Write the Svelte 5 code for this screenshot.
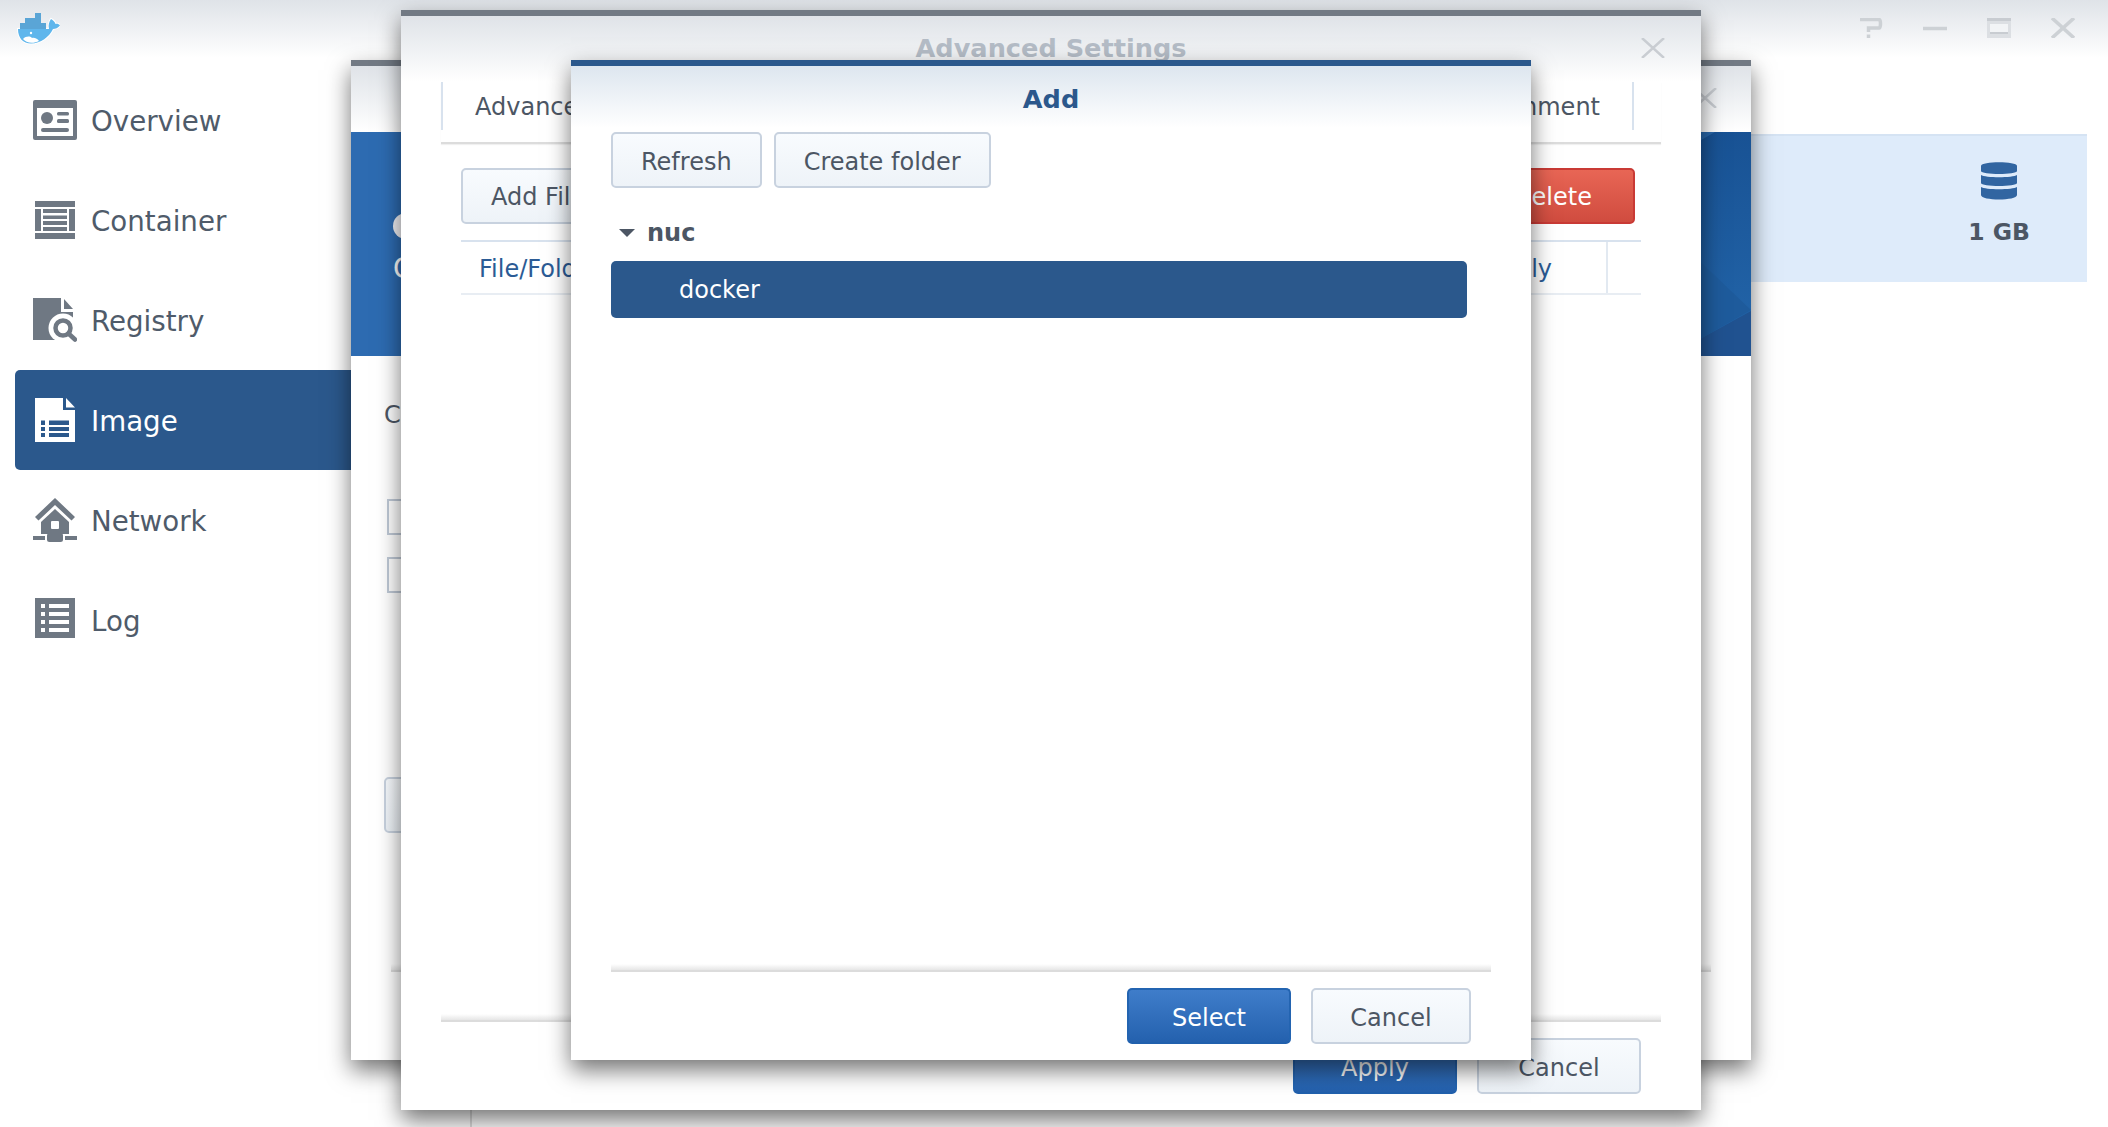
<script lang="ts">
  const navItems = [
    { id: 'overview', label: 'Overview' },
    { id: 'container', label: 'Container' },
    { id: 'registry', label: 'Registry' },
    { id: 'image', label: 'Image' },
    { id: 'network', label: 'Network' },
    { id: 'log', label: 'Log' },
  ];
  let active = $state('image');
</script>

<div class="app">
  <header class="topbar">
    <svg class="logo" width="44" height="33" viewBox="0 0 44 33">
      <path class="whale" d="M2 17H33C32 13 33 10 35 7C37 8 39 10 39.500 12C41 11.500 43 12 44 13.500C42 16 39.500 17 37 17C33 25 25 31.500 15 31.500C7 31.500 2 26 2 17Z" />
      <rect x="19" y="1" width="6" height="5" fill="#5aa5d6" />
      <rect x="9" y="6" width="16" height="5" fill="#5aa5d6" />
      <rect x="4" y="11" width="26" height="6" fill="#5aa5d6" />
      <path d="M7 27C10 24 14 24 16 26C18 25 22 27 23 29C17 32 10 31 7 27Z" fill="#fff" />
      <circle cx="15" cy="21" r="1.200" fill="#fff" />
    </svg>
    <div class="controls">
      <svg width="24" height="20" viewBox="0 0 24 20"><path d="M1 1.500H20C22 1.500 22 10 20 10H9.500V14M9.500 16.500V20" /></svg>
      <svg width="24" height="20" viewBox="0 0 24 20"><path d="M0 10.500H24" /></svg>
      <svg class="max" width="24" height="20" viewBox="0 0 24 20"><rect width="24" height="20" fill="#dcdfe3" /><rect y="0" width="24" height="3" fill="#c8ccd1" /><rect x="3" y="6" width="18" height="10" fill="#f2f4f6" /><rect x="3" y="14" width="18" height="2" fill="#c8ccd1" /></svg>
      <svg width="24" height="20" viewBox="0 0 24 20"><path d="M1 0L23 20M23 0L1 20" /></svg>
    </div>
  </header>

  <div class="shell">
    <nav class="sidebar">
      {#each navItems as item}
        <button type="button" class="nav-item {active === item.id ? 'is-active' : ''}" onclick={() => (active = item.id)}>
          <svg class="nav-icon" width="44" height="44" viewBox="0 0 44 44">
            {#if item.id === 'overview'}
              <rect y="2" width="44" height="40" rx="2" class="ink" />
              <rect x="4" y="10" width="36" height="28" fill="#fff" />
              <circle cx="14" cy="20" r="6" class="ink" />
              <rect x="24" y="14" width="12" height="3.500" rx="1.500" class="ink" />
              <rect x="24" y="21" width="12" height="4" rx="1.500" class="ink" />
              <rect x="8" y="30" width="28" height="4" rx="2" class="ink" />
            {:else if item.id === 'container'}
              <rect x="2" y="3" width="40" height="6" class="ink" />
              <rect x="2" y="35" width="40" height="6" class="ink" />
              <rect x="2" y="11" width="6" height="22" class="ink" />
              <rect x="36" y="11" width="6" height="22" class="ink" />
              <rect x="10" y="11" width="24" height="4" class="ink" />
              <rect x="10" y="17.500" width="24" height="3.500" class="ink" />
              <rect x="10" y="23" width="24" height="4" class="ink" />
              <rect x="10" y="29" width="24" height="4" class="ink" />
            {:else if item.id === 'registry'}
              <path class="ink" d="M0 0H28V14H40V42H0Z" />
              <path class="ink" d="M31 1L40 11H31Z" />
              <circle cx="30" cy="30" r="14.500" fill="#fff" />
              <path d="M35 35L44 44" stroke="#fff" stroke-width="8" />
              <circle cx="30" cy="30" r="7.500" fill="#fff" stroke="#6f7883" stroke-width="4.500" />
              <path d="M36 36L42 41.500" stroke="#6f7883" stroke-width="4.500" stroke-linecap="round" />
            {:else if item.id === 'image'}
              <path fill="#fff" d="M2 0H30V12H42V44H2Z" />
              <path fill="#fff" d="M33 0L42 9.500H33Z" />
              <rect x="8" y="22.500" width="4" height="4.500" fill="#2b588c" />
              <rect x="8" y="29" width="4" height="4" fill="#2b588c" />
              <rect x="8" y="35" width="4" height="4" fill="#2b588c" />
              <rect x="16" y="22.500" width="20" height="4.500" fill="#2b588c" />
              <rect x="16" y="29" width="20" height="4" fill="#2b588c" />
              <rect x="16" y="35" width="20" height="4" fill="#2b588c" />
            {:else if item.id === 'network'}
              <path class="ink" d="M22 0L42 19L38.500 22.500L22 7L5.500 22.500L2 19Z" />
              <path class="ink" d="M22 11L36 24V36H8V24Z" />
              <rect x="18" y="23" width="8" height="8" rx="1" fill="#fff" />
              <rect x="0" y="38" width="12" height="4" class="ink" />
              <rect x="32" y="38" width="12" height="4" class="ink" />
              <rect x="14" y="35" width="16" height="9" rx="2.500" class="ink" />
            {:else}
              <rect x="2" width="40" height="40" class="ink" />
              {#each [6, 14, 22, 30] as y}
                <rect x="8" {y} width="4" height="4" fill="#fff" />
                <rect x="16" {y} width="20" height="4" fill="#fff" />
              {/each}
            {/if}
          </svg>
          <span>{item.label}</span>
        </button>
      {/each}
    </nav>

    <main class="content">
      <div class="usage">
        <div class="usage-stat">
          <svg width="36" height="38" viewBox="0 0 36 38" fill="#3165a1">
            <path d="M0 4C0 -1 36 -1 36 4V9C36 13 0 13 0 9Z" />
            <path d="M0 13C4 16 32 16 36 13V21C36 25 0 25 0 21Z" />
            <path d="M0 25C4 28 32 28 36 25V33C36 39 0 39 0 33Z" />
          </svg>
          <strong>1 GB</strong>
        </div>
      </div>
      <div class="list-column"></div>
    </main>
  </div>

  <!-- stacked windows, back to front -->
  <section class="win win-create">
    <div class="win-head">
      <svg class="win-close" width="24" height="20" viewBox="0 0 24 20"><path d="M1 0L23 20M23 0L1 20" /></svg>
    </div>
    <div class="banner">
      <svg class="banner-art" width="1400" height="224" viewBox="0 0 1400 224">
        <defs>
          <linearGradient id="banner-right" x1="0" y1="0" x2="0" y2="1">
            <stop offset="0" stop-color="#185294" />
            <stop offset="0.8" stop-color="#2162a6" />
          </linearGradient>
        </defs>
        <rect x="1340" width="60" height="224" fill="url(#banner-right)" />
        <path d="M1340 121L1400 178L1340 212Z" fill="#1e5b9c" />
        <path d="M1340 212L1400 179V224H1340Z" fill="#205290" />
        <path d="M1340 14L1364 0H1340Z" fill="#2a68ab" />
      </svg>
      <span class="banner-disc"></span>
      <span class="banner-name">Container</span>
    </div>
    <div class="create-body">
      <p class="create-label">CPU priority</p>
      <span class="check"></span>
      <span class="check"></span>
      <button type="button" class="btn create-more">Advanced</button>
      <div class="rule"></div>
    </div>
  </section>

  <section class="win win-advanced">
    <h2 class="title muted">Advanced Settings</h2>
    <svg class="win-close" width="24" height="20" viewBox="0 0 24 20"><path d="M1 0L23 20M23 0L1 20" /></svg>
    <div class="tabs">
      <span class="tab">Advanced Settings</span>
      <span class="tab">Environment</span>
    </div>
    <div class="toolbar">
      <button type="button" class="btn">Add File</button>
      <button type="button" class="btn btn-danger">Delete</button>
    </div>
    <div class="table-head">
      <span class="col col-file">File/Folder</span>
      <span class="col col-ro">Read-Only</span>
      <span class="col col-end"></span>
    </div>
    <div class="foot">
      <div class="rule"></div>
      <div class="foot-btns">
        <button type="button" class="btn btn-primary w164">Apply</button>
        <button type="button" class="btn w164">Cancel</button>
      </div>
    </div>
  </section>

  <section class="win win-add">
    <h2 class="title add-title">Add</h2>
    <div class="add-tools">
      <button type="button" class="btn">Refresh</button>
      <button type="button" class="btn">Create folder</button>
    </div>
    <div class="tree">
      <div class="tree-root"><i class="caret"></i>nuc</div>
      <div class="tree-row">docker</div>
    </div>
    <div class="foot">
      <div class="rule"></div>
      <div class="foot-btns">
        <button type="button" class="btn btn-primary w164">Select</button>
        <button type="button" class="btn w160">Cancel</button>
      </div>
    </div>
  </section>
</div>

<style>
  :global(body) {
    margin: 0;
    background: #fff;
  }

  .app {
    position: relative;
    width: 2108px;
    height: 1127px;
    overflow: hidden;
    display: flex;
    flex-direction: column;
    background: #fff;
    font-family: "DejaVu Sans", sans-serif;
    color: #4c5664;
    font-size: 24px;
  }

  .topbar {
    flex: none;
    height: 58px;
    display: flex;
    justify-content: space-between;
    background: linear-gradient(#dfe3e8, #fff);
  }

  .logo {
    margin: 12px 0 0 16px;
  }

  .whale {
    fill: #5fb6ec;
    stroke: #fff;
    stroke-width: 2;
    paint-order: stroke;
  }

  .controls {
    display: flex;
    gap: 40px;
    padding: 18px 33px 0 0;
    align-items: flex-start;
  }

  .controls path {
    fill: none;
    stroke: #cdd1d5;
    stroke-width: 3.500;
  }

  .shell {
    flex: 1;
    display: flex;
    min-height: 0;
  }

  .sidebar {
    flex: none;
    width: 336px;
    padding: 12px 0 0 15px;
    display: flex;
    flex-direction: column;
  }

  .nav-item {
    height: 100px;
    display: flex;
    align-items: center;
    gap: 14px;
    padding: 0 0 0 18px;
    border: none;
    background: none;
    border-radius: 5px 0 0 5px;
    font: inherit;
    font-size: 27.700px;
    color: #4f5b6a;
    text-align: left;
    cursor: pointer;
  }

  .nav-item span {
    padding-top: 2px;
  }

  .nav-item.is-active {
    background: #2b588c;
    color: #fff;
  }

  .ink {
    fill: #6f7883;
  }

  .content {
    flex: 1;
    display: flex;
    flex-direction: column;
    padding: 76px 21px 0 0;
  }

  .usage {
    height: 146px;
    background: #deebfa;
    border-top: 2px solid #d5e3f3;
    display: flex;
    justify-content: flex-end;
    padding-right: 57px;
  }

  .usage-stat {
    display: flex;
    flex-direction: column;
    align-items: center;
    padding-top: 26px;
    gap: 18px;
  }

  .usage-stat strong {
    font-size: 23.500px;
    line-height: 28px;
  }

  .list-column {
    flex: 1;
    margin-left: 119px;
    border-left: 2px solid #dedede;
  }

  .win {
    position: absolute;
    box-sizing: border-box;
    display: flex;
    flex-direction: column;
    background: #fff;
    border-top: 6px solid #727a84;
    box-shadow: 0 10px 22px rgba(0, 0, 0, 0.55);
  }

  .win-create {
    left: 351px;
    top: 60px;
    width: 1400px;
    height: 1000px;
  }

  .win-advanced {
    left: 401px;
    top: 10px;
    width: 1300px;
    height: 1100px;
    background: linear-gradient(#dfe3e8, #fff 66px);
  }

  .win-add {
    left: 571px;
    top: 60px;
    width: 960px;
    height: 1000px;
    border-top-color: #2b588c;
    background: linear-gradient(#dde6ef, #fff 62px);
  }

  .win-head {
    height: 66px;
    flex: none;
    background: linear-gradient(#dfe3e8, #fff);
  }

  .win-close {
    position: absolute;
    right: 36px;
    top: 22px;
  }

  .win-close path {
    fill: none;
    stroke: #c9cdd2;
    stroke-width: 2.500;
  }

  .win-create .win-close {
    right: 34px;
    top: 22px;
  }

  .banner {
    position: relative;
    flex: none;
    height: 224px;
    box-sizing: border-box;
    padding: 81px 0 0 42px;
    display: flex;
    flex-direction: column;
    align-items: flex-start;
    background: #2d6bb1;
    color: #fff;
  }

  .banner-art {
    position: absolute;
    left: 0;
    top: 0;
  }

  .banner-disc {
    position: relative;
    width: 26px;
    height: 26px;
    border-radius: 50%;
    background: #f2f2f6;
  }

  .banner-name {
    position: relative;
    margin-top: 14px;
    font-size: 27.700px;
    line-height: 32px;
  }

  .create-body {
    flex: 1;
    display: flex;
    flex-direction: column;
    align-items: flex-start;
    padding: 0 40px 88px 33px;
  }

  .create-label {
    margin: 43px 0 0;
    font-size: 24px;
    line-height: 32px;
  }

  .check {
    box-sizing: border-box;
    width: 36px;
    height: 36px;
    margin: 0 0 22px 3px;
    border: 2px solid #bfc9d6;
  }

  .create-label + .check {
    margin-top: 68px;
  }

  .create-more {
    margin-top: 162px;
  }

  .create-body .rule {
    align-self: stretch;
    margin: auto 0 0 7px;
  }

  .btn {
    box-sizing: border-box;
    height: 56px;
    padding: 4px 28px 0;
    border: 2px solid #c8d2df;
    border-radius: 5px;
    background: linear-gradient(#f8fbfe, #eef3f8);
    font: inherit;
    color: #4c5664;
    cursor: pointer;
  }

  .toolbar .btn {
    padding-top: 2px;
  }

  .btn-primary {
    border-color: #2364b1 #2364b1 #2060ad;
    background: linear-gradient(#3f7dca, #2461ae);
    color: #fff;
  }

  .btn-danger {
    width: 165px;
    border-color: #c93a35;
    background: linear-gradient(#e86655, #d04c3f);
    color: #fff;
  }

  .w160 { width: 160px; padding: 4px 0 0; }
  .w164 { width: 164px; padding: 4px 0 0; }

  .title {
    margin: 0;
    text-align: center;
    font-size: 25.600px;
    font-weight: 700;
    color: #2b588c;
  }

  .title.add-title {
    line-height: 66px;
    height: 66px;
  }

  .title.muted {
    padding-top: 17px;
    line-height: 30px;
    color: #b4bcc6;
  }

  .tabs {
    display: flex;
    justify-content: space-between;
    margin: 19px 40px 0;
    height: 60px;
    padding-right: 27px;
    border-bottom: 2px solid #dcdcdc;
    box-shadow: 0 1px 1px rgba(0, 0, 0, 0.06);
  }

  .tab {
    height: 48px;
    line-height: 50px;
    white-space: nowrap;
    color: #4c5664;
  }

  .tab:first-child {
    padding-left: 32px;
    border-left: 2px solid #d8e2ee;
  }

  .tab:last-child {
    padding-right: 32px;
    border-right: 2px solid #d8e2ee;
  }

  .toolbar {
    display: flex;
    justify-content: space-between;
    margin: 24px 66px 0 60px;
  }

  .table-head {
    display: flex;
    height: 55px;
    box-sizing: border-box;
    margin: 16px 60px 0;
    border-top: 2px solid #d8e2ee;
    border-bottom: 2px solid #e8edf3;
    line-height: 55px;
    color: #2b5b95;
  }

  .col {
    white-space: nowrap;
  }

  .col-file {
    flex: 1;
    padding-left: 18px;
  }

  .col-ro {
    box-sizing: border-box;
    width: 260px;
    padding-right: 54px;
    text-align: right;
    border-right: 2px solid #e2e9f1;
  }

  .col-end {
    width: 33px;
  }

  .rule {
    height: 8px;
    box-sizing: border-box;
    background: linear-gradient(rgba(220, 220, 220, 0), #e6e6e6);
    border-bottom: 2px solid #dcdcdc;
  }

  .foot {
    margin-top: auto;
    padding: 0 40px 16px;
  }

  .foot-btns {
    display: flex;
    justify-content: flex-end;
    gap: 20px;
    margin-top: 16px;
    padding-right: 20px;
  }

  .add-tools {
    display: flex;
    gap: 12px;
    padding: 0 40px;
  }

  .tree {
    padding: 16px 64px 0 40px;
  }

  .tree-root {
    height: 57px;
    box-sizing: border-box;
    display: flex;
    align-items: center;
    font-weight: 700;
    line-height: 1;
  }

  .caret {
    width: 0;
    height: 0;
    margin: 0 12px 0 8px;
    border-left: 8px solid transparent;
    border-right: 8px solid transparent;
    border-top: 8px solid #4c5664;
  }

  .tree-row {
    height: 57px;
    line-height: 58px;
    padding-left: 68px;
    border-radius: 5px;
    background: #2b588c;
    color: #fff;
  }
</style>
